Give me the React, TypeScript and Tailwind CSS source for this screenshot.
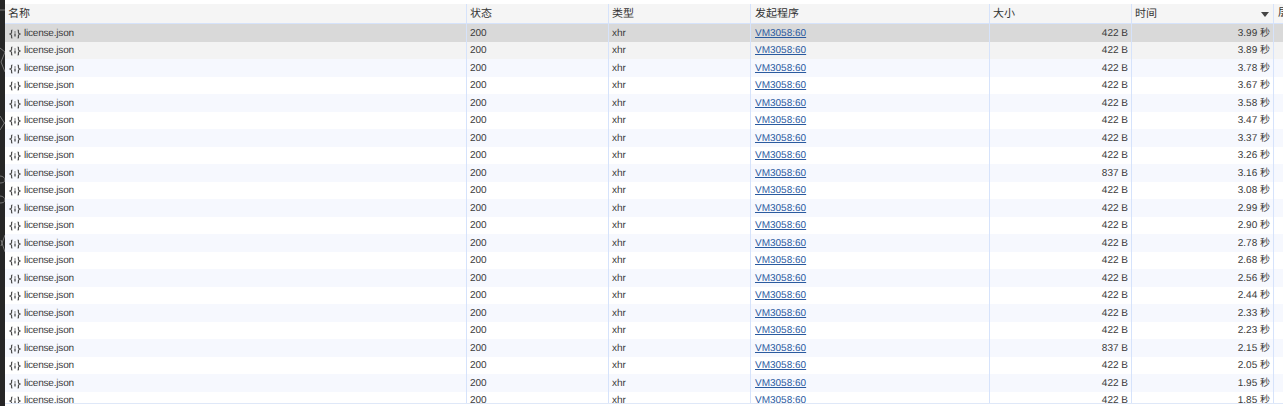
const times = [
  "3.99", "3.89", "3.78", "3.67", "3.58", "3.47", "3.37", "3.26", "3.16", "3.08", "2.99", "2.90",
  "2.78", "2.68", "2.56", "2.44", "2.33", "2.23", "2.15", "2.05", "1.95", "1.85",
];

const bigRows = [8, 18];

function JsonIcon() {
  return (
    <svg width="12" height="12" viewBox="0 0 12 12" fill="none" className="shrink-0">
      <path
        d="M3.4 2C2.2 2 2.6 3.2 2.6 4.2C2.6 5.2 2 5.7 1 6C2 6.3 2.6 6.8 2.6 7.8C2.6 8.8 2.2 10 3.4 10"
        stroke="#4a4a4a"
        strokeWidth="1.2"
      />
      <path
        d="M8.6 2C9.8 2 9.4 3.2 9.4 4.2C9.4 5.2 10 5.7 11 6C10 6.3 9.4 6.8 9.4 7.8C9.4 8.8 9.8 10 8.6 10"
        stroke="#4a4a4a"
        strokeWidth="1.2"
      />
      <path d="M6 3.4V4.6M6 5.6V8.6" stroke="#4a4a4a" strokeWidth="1.3" />
    </svg>
  );
}

// faint bits of whatever sits behind the devtools panel
function SideStrip() {
  return (
    <svg width="5" height="406" viewBox="0 0 5 406" fill="none" className="shrink-0 bg-[#262626]">
      <g stroke="#777" strokeWidth="1">
        <path d="M0 10H5" />
        <path d="M0 48L5 52M5 52L1 62M1 62L5 72" />
        <path d="M0 116L5 124M0 130L5 122" />
        <path d="M0 176C3 176 5 178 5 180C5 182 3 183 0 183" />
        <path d="M0 196C3 196 5 198 5 200C5 202 3 203 0 203" />
        <path d="M5 235L1 246M1 240L5 252" />
      </g>
    </svg>
  );
}

function Row({ index, time }: { index: number; time: string }) {
  const size = bigRows.includes(index) ? "837 B" : "422 B";
  let bg = index % 2 === 0 ? "bg-[#f6f8fe]" : "bg-white";
  if (index === 0) bg = "bg-[#d9d9d9]";
  if (index === 1) bg = "bg-[#f3f3f3]";

  return (
    <div className={`grid h-[17.5px] shrink-0 grid-cols-[462px_142px_142px_239px_142px_142px_9px] text-[10px] leading-[12px] text-[#3a3a3a] ${bg}`}>
      <div className="flex h-full items-center gap-[3px] border-r border-[#d6e3fb] pl-[4px] pt-[2px]">
        <JsonIcon />
        <span className="tracking-[-0.2px]">license.json</span>
      </div>
      <div className="flex h-full items-center border-r border-[#d6e3fb] pl-[3px] pt-[2px]">200</div>
      <div className="flex h-full items-center border-r border-[#d6e3fb] pl-[3px] pt-[2px]">xhr</div>
      <div className="flex h-full items-center border-r border-[#d6e3fb] pl-[4px] pt-[2px]">
        <span className="text-[#2a5a9f] underline">VM3058:60</span>
      </div>
      <div className="flex h-full items-center justify-end border-r border-[#d6e3fb] pr-[3px] pt-[2px]">{size}</div>
      <div className="flex h-full items-center justify-end border-r border-[#d6e3fb] pr-[3px] pt-[2px]">{time} 秒</div>
      <div />
    </div>
  );
}

export default function App() {
  return (
    <div className="flex h-[406px] w-[1283px] overflow-hidden bg-white [font-family:'Liberation_Sans','Noto_Sans_CJK_SC',sans-serif] [text-rendering:geometricPrecision]">
      <SideStrip />
      <div className="flex min-w-0 flex-1 flex-col">
        <div className="h-[4px] shrink-0 bg-white" />
        <div className="grid h-[20px] shrink-0 grid-cols-[462px_142px_142px_239px_142px_142px_9px] items-center border-b border-[#d6e3fb] bg-[#f5f5f5] text-[11px] text-[#333]">
          <div className="flex h-full items-center border-r border-[#d6e3fb] pl-[3px] pt-px">名称</div>
          <div className="flex h-full items-center border-r border-[#d6e3fb] pl-[3px] pt-px">状态</div>
          <div className="flex h-full items-center border-r border-[#d6e3fb] pl-[3px] pt-px">类型</div>
          <div className="flex h-full items-center border-r border-[#d6e3fb] pl-[4px] pt-px">发起程序</div>
          <div className="flex h-full items-center border-r border-[#d6e3fb] pl-[3px] pt-px">大小</div>
          <div className="flex h-full items-center justify-between border-r border-[#d6e3fb] pl-[3px] pr-[4px] pt-px">
            <span>时间</span>
            <span className="h-0 w-0 border-x-[4px] border-t-[5px] border-x-transparent border-t-[#444]" />
          </div>
          <div className="overflow-hidden whitespace-nowrap pl-[4px]">层</div>
        </div>
        <div className="flex h-[380px] shrink-0 flex-col overflow-hidden border-b border-[#dfe8f8]">
          {times.map((time, i) => (
            <Row key={i} index={i} time={time} />
          ))}
        </div>
      </div>
    </div>
  );
}
